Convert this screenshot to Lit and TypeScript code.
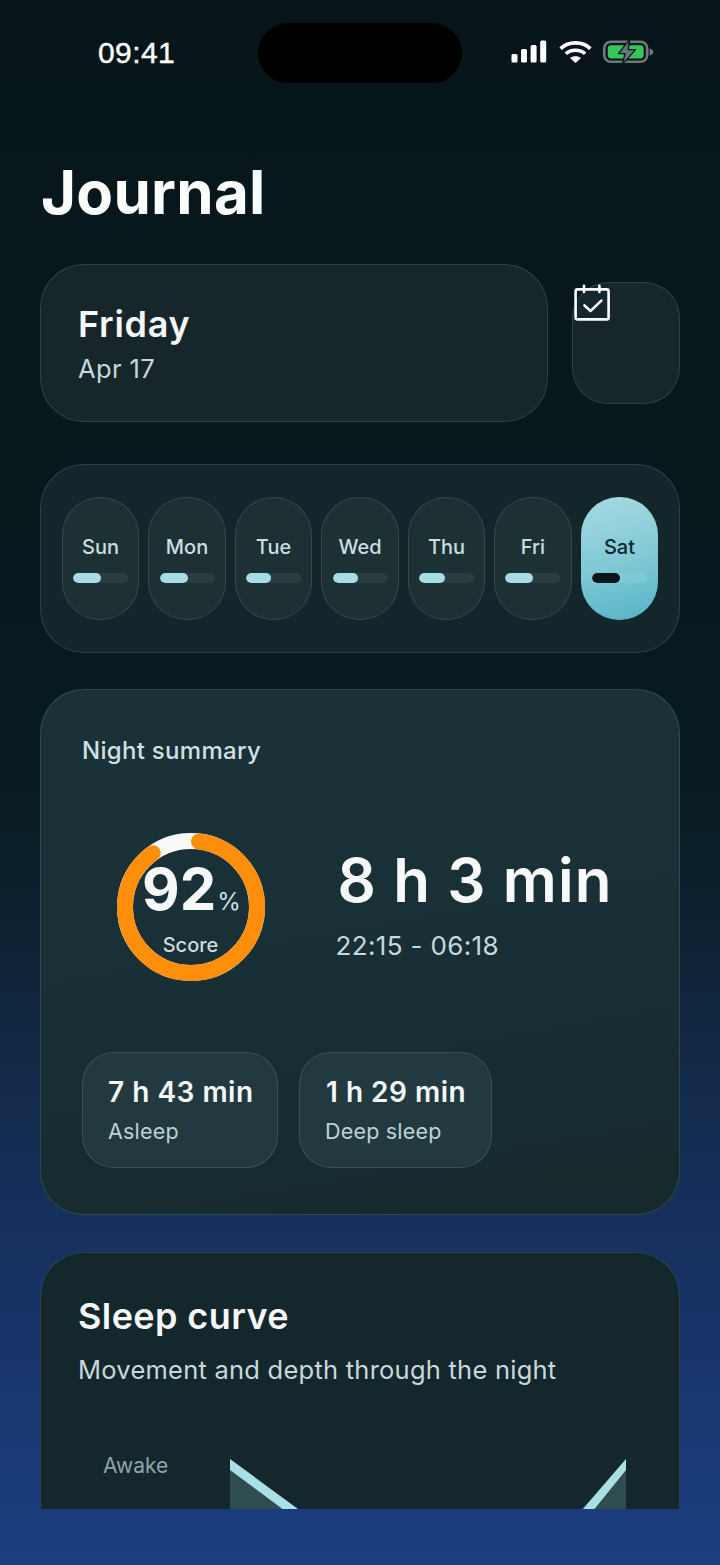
import { LitElement, html, css, svg } from "lit";
import { customElement, property } from "lit/decorators.js";

const DAYS = [
  { name: "Sun", fill: 51 },
  { name: "Mon", fill: 52 },
  { name: "Tue", fill: 46 },
  { name: "Wed", fill: 46 },
  { name: "Thu", fill: 47 },
  { name: "Fri", fill: 50 },
  { name: "Sat", fill: 51, active: true },
];

@customElement("score-ring")
export class ScoreRing extends LitElement {
  static styles = css`
    :host { display: block; position: relative; width: 148px; height: 148px; }
    svg { display: block; }
    .label {
      position: absolute; inset: 0;
      display: flex; flex-direction: column; align-items: center;
    }
    .num { margin-top: 24px; font-size: 58px; line-height: 64px; font-weight: 700; color: #f7f9f9; display: flex; align-items: baseline; padding-left: 2px; }
    .num span { font-size: 24px; font-weight: 400; color: #cfdfe1; margin-left: 1px; }
    .score { margin-top: -1px; font-size: 20px; line-height: 24px; font-weight: 500; color: #c9dcdf; }
  `;

  @property({ type: Number }) arc = 317;
  @property({ type: Number }) start = 7;

  render() {
    const r = 66;
    const c = 2 * Math.PI * r;
    return html`
      <svg width="148" height="148" viewBox="0 0 148 148">
        <circle cx="74" cy="74" r=${r} fill="none" stroke="#f8f9f9" stroke-width="16"></circle>
        <circle cx="74" cy="74" r=${r} fill="none" stroke="#ff8f0a" stroke-width="16" stroke-linecap="round"
          stroke-dasharray="${(c * this.arc) / 360} ${c}"
          transform="rotate(${this.start - 90} 74 74)"></circle>
      </svg>
      <div class="label">
        <div class="num">92<span>%</span></div>
        <div class="score">Score</div>
      </div>
    `;
  }
}

@customElement("app-root")
export class AppRoot extends LitElement {
  static styles = css`
    :host {
      display: block;
      width: 720px;
      height: 1565px;
      overflow: hidden;
      font-family: Inter, "Noto Sans", sans-serif;
      background: linear-gradient(180deg, #07151a 0%, #081b20 50%, #0f2438 62%, #17305e 78%, #1a3e80 100%);
    }
    .page { height: 1509px; overflow: hidden; padding: 0 40px; box-sizing: border-box; }

    .status { display: flex; align-items: center; height: 60px; margin: 23px -40px 0; }
    .time { width: 77px; margin-left: 98px; font: 400 30px/36px "Liberation Sans", Arial, sans-serif; color: #fff; letter-spacing: 0.4px; -webkit-text-stroke: 0.4px #fff; }
    .island { width: 204px; height: 60px; margin-left: 83px; border-radius: 30px; background: #000; }
    .status-icons { margin-left: 49px; display: block; overflow: visible; }

    h1 { margin: 73px 0 0 1px; font-size: 60px; line-height: 72px; font-weight: 700; color: #fbfcfc; letter-spacing: 0.3px; }

    .card { box-sizing: border-box; border: 1.5px solid rgba(160, 220, 190, 0.16); border-radius: 44px; }

    .date-row { display: flex; align-items: center; gap: 24px; margin-top: 36px; }
    .date { flex: 1; height: 158px; padding: 36px 37px; background: #17262a; }
    .date-day { font-size: 36px; line-height: 46px; font-weight: 600; color: #f5f8f8; letter-spacing: 0.7px; }
    .date-sub { margin-top: 6px; font-size: 25.5px; line-height: 32px; color: #c8d8da; letter-spacing: 0.4px; }
    .cal { position: relative; flex: none; width: 108px; height: 122px; border-radius: 36px; background: #17262a; border: 1.5px solid rgba(160, 220, 190, 0.16); box-sizing: border-box; }
    .cal svg { position: absolute; left: 0; top: 0; }

    .week { display: grid; grid-template-columns: repeat(7, 1fr); gap: 9.4px; height: 189px; margin-top: 42px; padding: 32px 21px 0; background: #13262b; }
    .day {
      box-sizing: border-box; height: 122.5px; border-radius: 38px;
      border: 1.5px solid rgba(160, 220, 190, 0.16); background: #1d3034;
      display: flex; flex-direction: column; align-items: center;
    }
    .day .name { margin-top: 36px; font-size: 20px; line-height: 26px; font-weight: 500; color: #c9dee0; }
    .bar { margin-top: 13px; width: 55px; height: 10px; border-radius: 5px; background: #2a3e42; overflow: hidden; }
    .bar i { display: block; height: 100%; border-radius: 5px; background: #a6dde4; }
    .day.active { border: none; background: linear-gradient(165deg, #a6dbe2 0%, #7fc8d4 55%, #55b4c6 100%); }
    .day.active .name { color: #0b2830; margin-top: 37px; }
    .day.active .bar { background: rgba(130, 205, 215, 0.6); }
    .day.active .bar i { background: #06161b; }

    .summary {
      height: 526px; margin-top: 36px; padding: 46px 41px 0;
      background: linear-gradient(170deg, #1a3137 0%, #183036 45%, #16292d 100%);
    }
    .summary-title { font-size: 24px; line-height: 30px; font-weight: 500; color: #cfe0e2; letter-spacing: 0.3px; }
    .main { display: flex; align-items: flex-start; margin-top: 67px; }
    .main score-ring { margin-left: 34.5px; }
    .dur { margin-left: 73px; padding-top: 11px; }
    .dur-big { font-size: 60px; line-height: 72px; font-weight: 600; color: #f7f9f9; letter-spacing: 1.1px; white-space: nowrap; }
    .dur-range { margin-top: 14px; margin-left: -2px; font-size: 26px; line-height: 32px; color: #c8d9db; letter-spacing: 0.35px; }
    .tiles { display: grid; grid-template-columns: 196px 193px; gap: 21px; margin-top: 71px; }
    .tile { box-sizing: border-box; height: 116px; padding: 22px 0 0 25px; border-radius: 32px; border: 1.5px solid rgba(160, 220, 190, 0.16); background: #223a3f; }
    .tile + .tile { padding-left: 26px; }
    .tile-val { font-size: 28px; line-height: 34px; font-weight: 600; color: #f5f8f8; letter-spacing: 0.5px; white-space: nowrap; }
    .tile-lab { margin-top: 8px; font-size: 21.5px; line-height: 28px; color: #bcd2d5; letter-spacing: 0.2px; }
    .tile + .tile .tile-lab { margin-left: -1px; }

    .sleep { position: relative; height: 320px; margin-top: 37px; padding: 38px 37px 0; background: #14272d; }
    .sleep h2 { margin: 0; font-size: 36px; line-height: 50px; font-weight: 600; color: #f5f8f8; letter-spacing: 0.4px; }
    .sleep p { margin: 13px 0 0; font-size: 25.5px; line-height: 32px; color: #c8d8da; letter-spacing: 0.24px; white-space: nowrap; }
    .chart-row { position: relative; margin-top: 66px; margin-left: 25px; }
    .axis { font-size: 21px; line-height: 28px; color: #8ea4a8; }
    .curve { position: absolute; left: 127px; top: 7px; display: block; }
  `;

  private statusIcons() {
    return html`
      <svg class="status-icons" width="145" height="26" viewBox="0 0 145 26" fill="none">
        ${svg`
          <rect x="0.5" y="14" width="6" height="8.5" rx="1.6" fill="#fff"></rect>
          <rect x="10" y="9" width="6" height="13.5" rx="1.6" fill="#fff"></rect>
          <rect x="19.6" y="5" width="6" height="17.5" rx="1.6" fill="#fff"></rect>
          <rect x="29.2" y="0.6" width="6" height="21.9" rx="1.6" fill="#fff"></rect>
          <g fill="none" stroke="#fff" stroke-width="3.6">
            <path d="M49.6 8.6 C57.6 1 71.4 1 79.4 8.6"></path>
            <path d="M54.8 13.8 C60 9 69 9 74.2 13.8"></path>
          </g>
          <path d="M59 18 C62 15.6 67 15.6 70 18 L64.5 23 Z" fill="#fff"></path>
          <rect x="93.2" y="1.8" width="43" height="20" rx="6.5" stroke="#70777a" stroke-width="2.6"></rect>
          <rect x="96.8" y="5.2" width="35.8" height="13.2" rx="3.4" fill="#34c759"></rect>
          <path d="M138.6 8.5 C141 9.2 142.4 10.4 142.4 12 C142.4 13.6 141 14.8 138.6 15.5 Z" fill="#70777a"></path>
          <path d="M118.6 -0.4 L107.4 13.6 L114 13.6 L111.4 24.4 L124.6 9.6 L117.2 9.6 Z" fill="#6d7477" stroke="#0a1a1e" stroke-width="1.4" stroke-linejoin="round"></path>
        `}
      </svg>
    `;
  }

  render() {
    return html`
      <div class="page">
        <div class="status">
          <div class="time">09:41</div>
          <div class="island"></div>
          ${this.statusIcons()}
        </div>

        <h1>Journal</h1>

        <div class="date-row">
          <div class="card date">
            <div class="date-day">Friday</div>
            <div class="date-sub">Apr 17</div>
          </div>
          <div class="cal">
            <svg width="40" height="40" viewBox="0 0 40 40" fill="none" stroke="#fff" stroke-width="2.6" stroke-linecap="round" stroke-linejoin="round">
              <rect x="2.6" y="6.4" width="33" height="30" rx="2"></rect>
              <path d="M11 2.8 V9 M26.4 2.8 V9"></path>
              <path d="M11.5 22.5 L17.5 28 L28.4 17.6"></path>
            </svg>
          </div>
        </div>

        <div class="card week">
          ${DAYS.map(
            (d) => html`
              <div class="day ${d.active ? "active" : ""}">
                <div class="name">${d.name}</div>
                <div class="bar"><i style="width:${d.fill}%"></i></div>
              </div>
            `
          )}
        </div>

        <div class="card summary">
          <div class="summary-title">Night summary</div>
          <div class="main">
            <score-ring></score-ring>
            <div class="dur">
              <div class="dur-big">8 h 3 min</div>
              <div class="dur-range">22:15 - 06:18</div>
            </div>
          </div>
          <div class="tiles">
            <div class="tile">
              <div class="tile-val">7 h 43 min</div>
              <div class="tile-lab">Asleep</div>
            </div>
            <div class="tile">
              <div class="tile-val">1 h 29 min</div>
              <div class="tile-lab">Deep sleep</div>
            </div>
          </div>
        </div>

        <div class="card sleep">
          <h2>Sleep curve</h2>
          <p>Movement and depth through the night</p>
          <div class="chart-row">
            <div class="axis">Awake</div>
            <svg class="curve" width="398" height="80" viewBox="0 0 398 80">
              <path d="M0 0 L70 52 L70 80 L0 80 Z M396 0 L350 52 L350 80 L396 80 Z" fill="#2f4c50"></path>
              <path d="M0 0 L68 50 L52.5 50 L0 11 Z M396 0 L396 11 L364.5 50 L353 50 Z" fill="#a9e0e6"></path>
            </svg>
          </div>
        </div>
      </div>
    `;
  }
}
